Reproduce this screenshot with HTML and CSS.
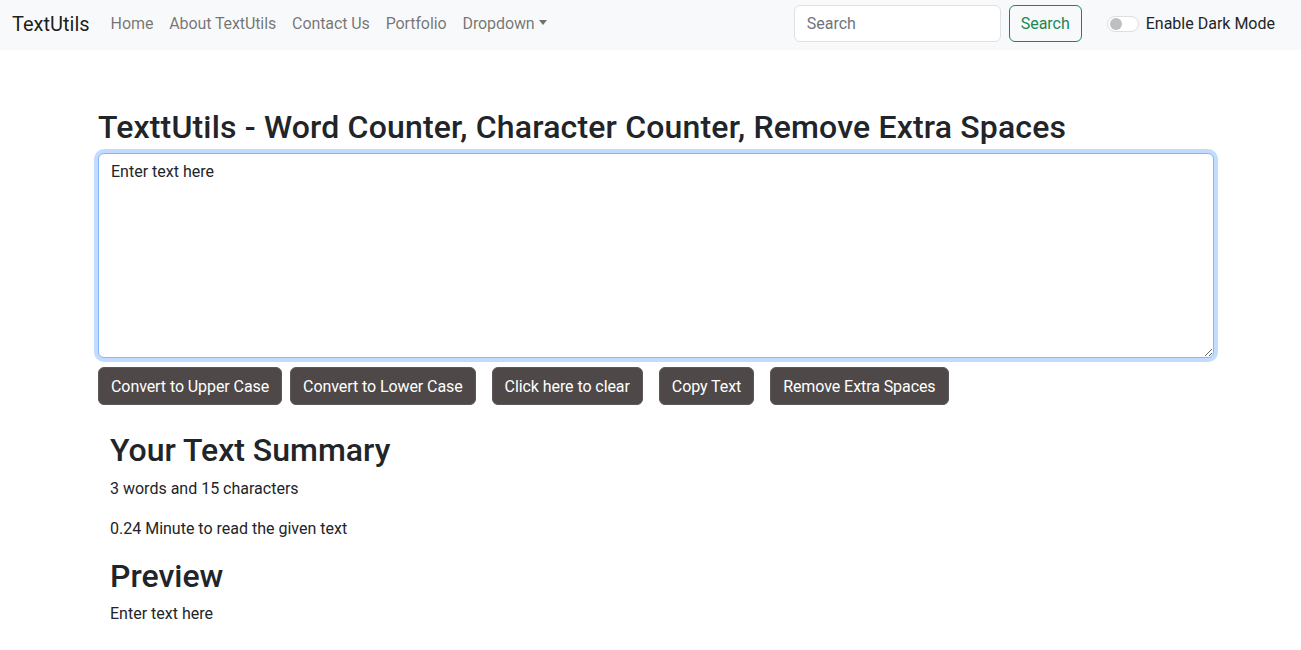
FILE: index.html
```html
<!DOCTYPE html>
<html lang="en">
<head>
<meta charset="utf-8">
<title>TextUtils</title>
<link rel="stylesheet" href="styles.css">
</head>
<body>
<nav class="navbar">
  <a class="brand" href="#">TextUtils</a>
  <ul class="nav-links">
    <li><a href="#">Home</a></li>
    <li><a href="#">About TextUtils</a></li>
    <li><a href="#">Contact Us</a></li>
    <li><a href="#">Portfolio</a></li>
    <li><a href="#" class="dropdown">Dropdown</a></li>
  </ul>
  <form class="search-form">
    <input class="search-input" type="search" placeholder="Search">
    <button class="search-btn" type="button">Search</button>
  </form>
  <label class="switch">
    <span class="switch-track"><span class="switch-knob"></span></span>
    <span class="switch-label">Enable Dark Mode</span>
  </label>
</nav>

<main class="container">
  <h1 class="title">TexttUtils - Word Counter, Character Counter, Remove Extra Spaces</h1>
  <textarea class="text-box" rows="8">Enter text here</textarea>
  <div class="btn-row">
    <button class="btn btn-first" type="button">Convert to Upper Case</button>
    <button class="btn" type="button">Convert to Lower Case</button>
    <button class="btn" type="button">Click here to clear</button>
    <button class="btn" type="button">Copy Text</button>
    <button class="btn" type="button">Remove Extra Spaces</button>
  </div>
  <section class="summary">
    <h2 class="section-title">Your Text Summary</h2>
    <p class="stat">3 words and 15 characters</p>
    <p class="stat">0.24 Minute to read the given text</p>
    <h2 class="section-title preview-title">Preview</h2>
    <p class="preview">Enter text here</p>
  </section>
</main>
</body>
</html>
```
FILE: styles.css
```css
* { box-sizing: border-box; }

body {
  margin: 0;
  font-family: Roboto, "Liberation Sans", sans-serif;
  font-size: 16px;
  line-height: 1.5;
  color: #212529;
  background: #fff;
}

a { text-decoration: none; }

.navbar {
  height: 50px;
  background: #f8f9fa;
  display: flex;
  align-items: center;
  padding: 0 26px 3px 12px;
}

.brand {
  font-size: 20px;
  line-height: 30px;
  color: rgba(0, 0, 0, 0.9);
  margin-right: 13px;
}

.nav-links {
  list-style: none;
  display: flex;
  margin: 0;
  padding: 0;
}

.nav-links a {
  display: block;
  padding: 0 8px;
  color: rgba(0, 0, 0, 0.55);
  letter-spacing: -0.1px;
}

.dropdown::after {
  content: "";
  display: inline-block;
  margin-left: 4px;
  vertical-align: 4px;
  border-top: 5px solid;
  border-left: 4px solid transparent;
  border-right: 4px solid transparent;
}

.search-form {
  margin-left: auto;
  display: flex;
  gap: 8px;
}

.search-input {
  width: 207px;
  height: 37px;
  padding: 6px 12px;
  border: 1px solid #dee2e6;
  border-radius: 6px;
  background: #fff;
  font: inherit;
  color: #212529;
  outline: none;
}

.search-input::placeholder { color: #6c757d; }

.search-btn {
  width: 73px;
  height: 37px;
  padding: 6px 0;
  border: 1px solid #198754;
  border-radius: 6px;
  background: transparent;
  color: #198754;
  font: inherit;
}

.switch {
  display: flex;
  align-items: center;
  margin-left: 25px;
}

.switch-track {
  width: 32px;
  height: 16px;
  border: 1px solid #dcdfe3;
  border-radius: 8px;
  background: #fff;
  display: flex;
  align-items: center;
  padding-left: 2px;
}

.switch-knob {
  width: 12px;
  height: 12px;
  border-radius: 50%;
  background: #bfbfbf;
}

.switch-label {
  margin-left: 7px;
  color: #212529;
}

.container {
  width: 1116px;
  margin-left: 98px;
}

.title {
  font-size: 32px;
  font-weight: 500;
  line-height: 1.2;
  letter-spacing: 0.17px;
  margin: 58px 0 7px;
  white-space: nowrap;
}

.text-box {
  display: block;
  width: 100%;
  height: 205px;
  padding: 6px 12px;
  border: 1px solid #86b7fe;
  border-radius: 6px;
  box-shadow: 0 0 0 4px rgba(13, 110, 253, 0.25);
  font: inherit;
  color: #212529;
  outline: none;
  resize: vertical;
}

.btn-row {
  display: flex;
  gap: 16px;
  margin-top: 9px;
}

.btn {
  height: 38px;
  padding: 6px 12px 5px;
  border: 1px solid #5d5857;
  border-radius: 6px;
  background: #4e4948;
  color: #fff;
  font: inherit;
  letter-spacing: -0.08px;
}

.btn-first { margin-right: -8px; }

.summary {
  padding: 0 12px;
  margin-top: 26px;
}

.section-title {
  font-size: 32px;
  font-weight: 500;
  line-height: 1.2;
  margin: 0 0 7px;
}

.preview-title { margin-top: 4px; }

.stat {
  margin: 0 0 16px;
  line-height: 24px;
}

.preview {
  margin: 0;
}
```
